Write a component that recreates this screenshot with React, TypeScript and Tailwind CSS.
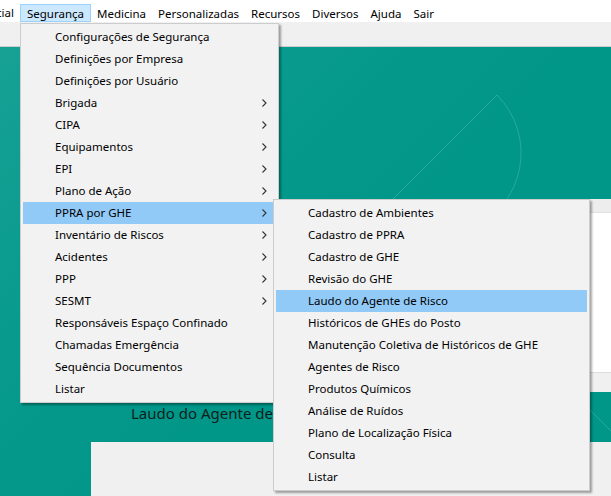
import React from "react";

const mainItems: { label: string; sub?: boolean; active?: boolean }[] = [
  { label: "Configurações de Segurança" },
  { label: "Definições por Empresa" },
  { label: "Definições por Usuário" },
  { label: "Brigada", sub: true },
  { label: "CIPA", sub: true },
  { label: "Equipamentos", sub: true },
  { label: "EPI", sub: true },
  { label: "Plano de Ação", sub: true },
  { label: "PPRA por GHE", sub: true, active: true },
  { label: "Inventário de Riscos", sub: true },
  { label: "Acidentes", sub: true },
  { label: "PPP", sub: true },
  { label: "SESMT", sub: true },
  { label: "Responsáveis Espaço Confinado" },
  { label: "Chamadas Emergência" },
  { label: "Sequência Documentos" },
  { label: "Listar" },
];

const subItems: { label: string; active?: boolean }[] = [
  { label: "Cadastro de Ambientes" },
  { label: "Cadastro de PPRA" },
  { label: "Cadastro de GHE" },
  { label: "Revisão do GHE" },
  { label: "Laudo do Agente de Risco", active: true },
  { label: "Históricos de GHEs do Posto" },
  { label: "Manutenção Coletiva de Históricos de GHE" },
  { label: "Agentes de Risco" },
  { label: "Produtos Químicos" },
  { label: "Análise de Ruídos" },
  { label: "Plano de Localização Física" },
  { label: "Consulta" },
  { label: "Listar" },
];

function Chevron() {
  return (
    <svg width="5" height="8" viewBox="0 0 5 8" className="block">
      <polyline points="0.5,0.5 4,4 0.5,7.5" fill="none" stroke="#333" strokeWidth="1.1" />
    </svg>
  );
}

export default function App() {
  return (
    <div className="relative w-[611px] h-[496px] overflow-hidden flex flex-col text-[11.5px] text-black font-['Segoe_UI','Noto_Sans',sans-serif]">
      {/* Menu bar */}
      <div className="h-[22px] bg-white flex items-stretch pt-[4px] leading-[18px] shrink-0">
        <div className="w-[20px] overflow-hidden flex justify-end">
          <span className="pr-[6px] whitespace-nowrap">Inicial</span>
        </div>
        <div className="px-[6px] bg-[#cce8ff] border border-[#99d1ff]">Segurança</div>
        <div className="px-[5px] border border-transparent">Medicina</div>
        <div className="px-[5px] border border-transparent">Personalizadas</div>
        <div className="px-[5px] border border-transparent">Recursos</div>
        <div className="px-[5px] border border-transparent">Diversos</div>
        <div className="px-[5px] border border-transparent">Ajuda</div>
        <div className="px-[5px] border border-transparent">Sair</div>
      </div>
      {/* toolbar band */}
      <div className="h-[25px] bg-[#f0f0f0] border-b border-[#cdcdcd] shrink-0" />
      {/* desktop */}
      <div className="relative flex-1 flex flex-col bg-[linear-gradient(135deg,#17a195_0%,#079a8d_30%,#009688_55%)]">
        <svg className="absolute left-0 top-0" width="611" height="449" viewBox="0 47 611 449">
          <path d="M497 95 L300 292" stroke="#26ab9e" strokeWidth="1" fill="none" />
          <path d="M497 95 A82 82 0 0 1 470 229" stroke="#26ab9e" strokeWidth="1" fill="none" />
          <path d="M588 408 L620 440" stroke="#26ab9e" strokeWidth="1" fill="none" />
        </svg>
        <div className="relative mt-[152px] ml-[91px] h-[193px] bg-white flex flex-col">
          <div className="h-[14px] bg-[#ededed] border-b border-[#e0e0e0]" />
          <div className="flex-1" />
          <div className="h-[20px] bg-[#f0f0f0] border-t border-[#dcdcdc]" />
        </div>
        <div className="relative h-[50px] pl-[131px] pt-[11px] text-[15px] leading-[20px] text-[#0d1f1c] whitespace-nowrap">
          Laudo do Agente de Risco
        </div>
        <div className="relative flex-1 ml-[91px] bg-[#f0f0f0]" />
      </div>

      {/* Main dropdown */}
      <div className="absolute left-[20px] top-[23px] w-[259px] bg-[#f2f2f2] border border-[#cccccc] py-[2px] pl-[2px] pr-[4px] shadow-[2px_2px_2px_rgba(0,0,0,0.35)]">
        {mainItems.map((it) => (
          <div
            key={it.label}
            className={`h-[22px] flex items-center pl-[32px] pr-[7px] ${it.active ? "bg-[#91c9f7]" : ""}`}
          >
            <span className="flex-1 whitespace-nowrap">{it.label}</span>
            {it.sub ? <Chevron /> : null}
          </div>
        ))}
      </div>

      {/* Sub dropdown */}
      <div className="absolute left-[273px] top-[199px] w-[317px] bg-[#f2f2f2] border border-[#cccccc] py-[2px] pl-[2px] pr-[2px] shadow-[2px_2px_2px_rgba(0,0,0,0.35)]">
        {subItems.map((it) => (
          <div
            key={it.label}
            className={`h-[22px] flex items-center pl-[32px] ${it.active ? "bg-[#91c9f7]" : ""}`}
          >
            <span className="whitespace-nowrap">{it.label}</span>
          </div>
        ))}
      </div>
    </div>
  );
}
